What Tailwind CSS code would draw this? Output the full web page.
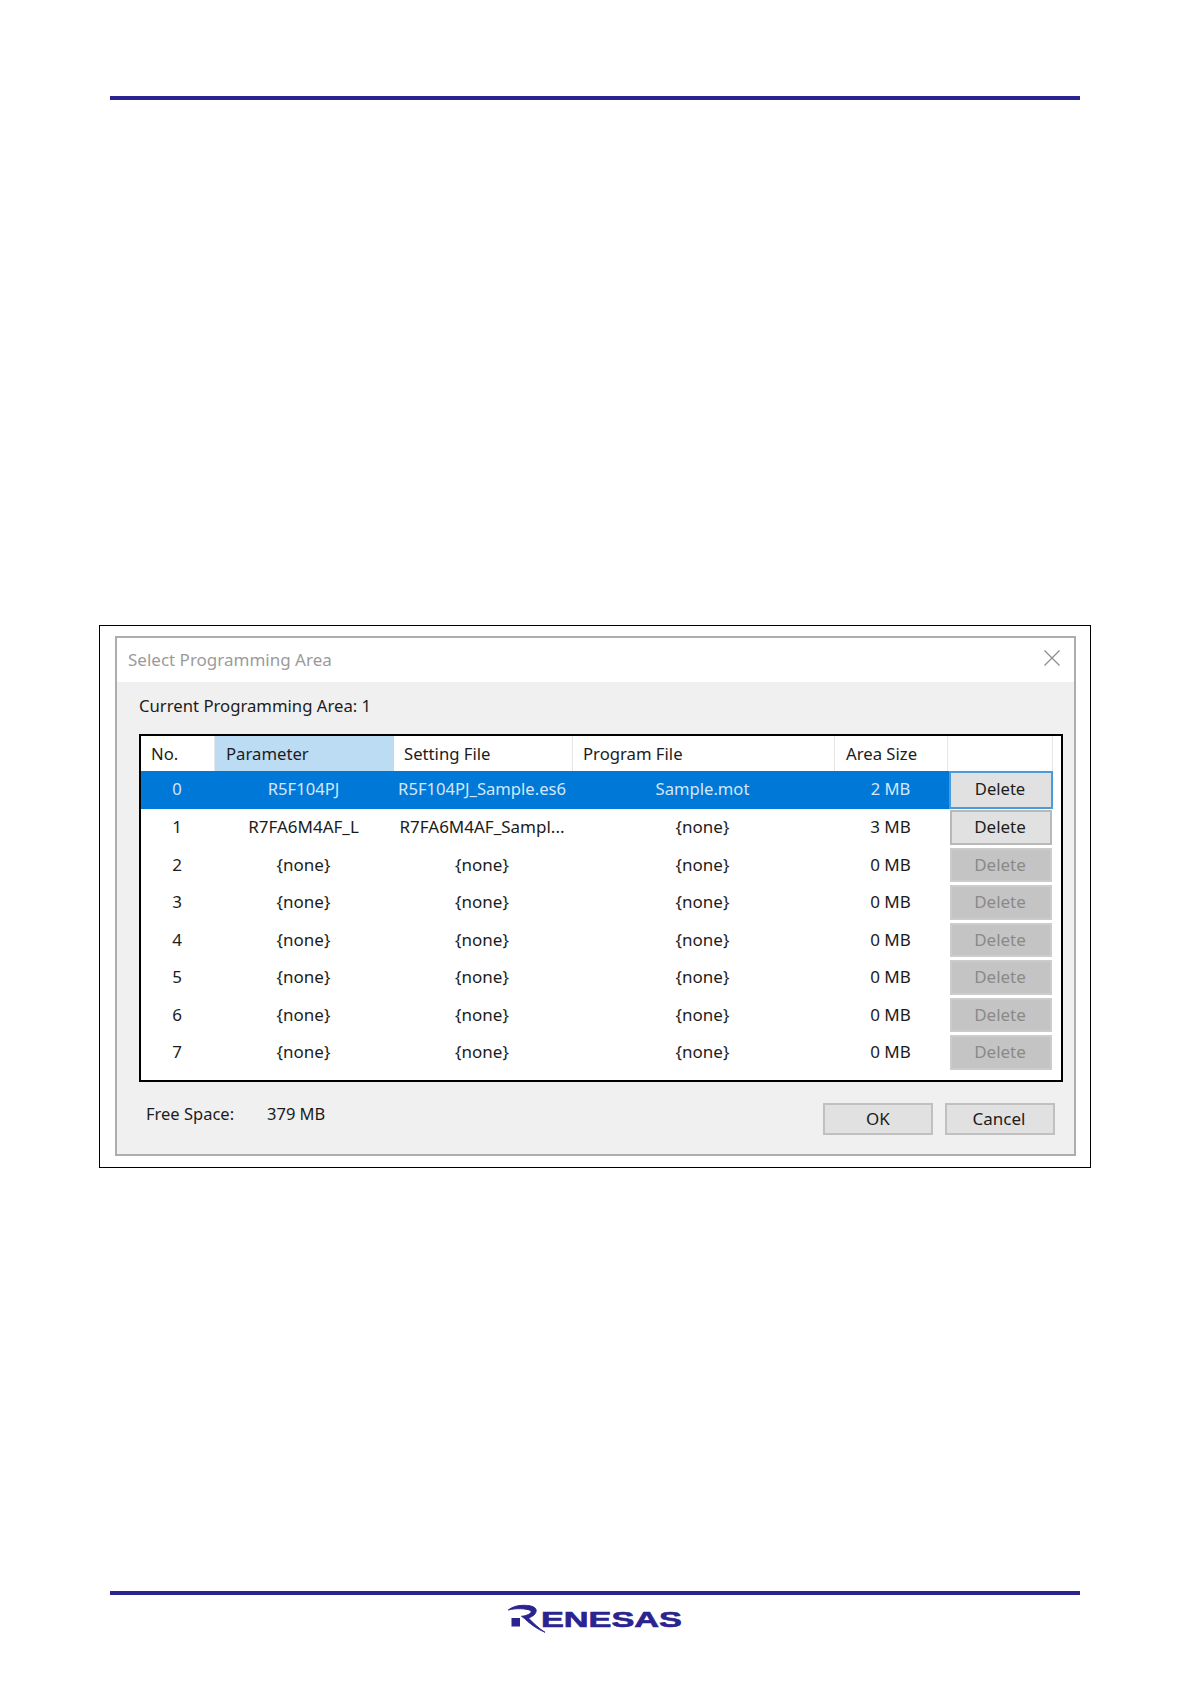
<!DOCTYPE html>
<html lang="en">
<head>
    <meta charset="UTF-8">
    <title>Select Programming Area</title>
    <script src="https://cdn.jsdelivr.net/npm/@tailwindcss/browser@4"></script>
</head>
<body class="bg-white font-['Noto_Sans',sans-serif] text-[17px] text-[#1c1c1c]">
<div class="w-[1191px] h-[1684px] flex flex-col overflow-hidden">
    <div class="mt-[96px] ml-[110px] w-[970px] h-[4px] bg-[#2a2390]"></div>

    <!-- screenshot frame -->
    <div class="mt-[525px] ml-[99px] w-[992px] h-[543px] border border-black pt-[10px] pl-[15px]">
        <div class="w-[961px] h-[520px] border-2 border-[#adadad] bg-[#f0f0f0] flex flex-col">
            <div class="h-[44px] bg-white flex items-center justify-between pl-[11px] pr-[13px] text-[#9b9b9b] text-[17px]">
                <span class="-mt-[1px]">Select Programming Area</span>
                <svg class="w-[18px] h-[18px] -mt-[4px]" viewBox="0 0 18 18" fill="none" stroke="#8c8c8c" stroke-width="1.2"><path d="M1.5 1.5l15 15M16.5 1.5l-15 15"/></svg>
            </div>
            <div class="pl-[22px] pr-[11px] pt-[11px]">
                <div class="h-[26px] leading-[26px] text-[16.7px]">Current Programming Area: 1</div>

                <!-- table -->
                <div class="mt-[15px] w-[924px] h-[348px] border-2 border-black bg-white">
                    <div class="grid grid-cols-[74px_179px_179px_262px_113px_105px] w-[912px] h-[35px] items-center text-[16.7px]">
                        <div class="h-full flex items-center pl-[10px] border-r border-[#e6e6e6]">No.</div>
                        <div class="h-full flex items-center pl-[11px] bg-[#bcdcf4]">Parameter</div>
                        <div class="h-full flex items-center pl-[10px] border-r border-[#e6e6e6]">Setting File</div>
                        <div class="h-full flex items-center pl-[10px] border-r border-[#e6e6e6]">Program File</div>
                        <div class="h-full flex items-center pl-[11px] border-r border-[#e6e6e6]">Area Size</div>
                        <div class="h-full border-r border-[#e6e6e6]"></div>
                    </div>

                    <div class="grid grid-cols-[72px_181px_176px_265px_111px_107px] w-[912px] h-[37.57px] items-center text-center bg-[#0078d7] text-[#d4e7f8] text-[16.6px] [&>div:not(:last-child)]:-mt-[1px]">
                        <div>0</div>
                        <div>R5F104PJ</div>
                        <div class="whitespace-nowrap">R5F104PJ_Sample.es6</div>
                        <div>Sample.mot</div>
                        <div>2 MB</div>
                        <div class="h-full"><div class="h-full ml-[3px] w-[104px] pb-[1px] pr-[2px] flex items-center justify-center bg-[#e1e1e1] border-2 border-[#4a9bdc] text-[#1c1c1c]">Delete</div></div>
                    </div>
                    <div class="grid grid-cols-[72px_181px_176px_265px_111px_107px] w-[912px] h-[37.57px] items-center text-center [&>div:not(:last-child)]:-mt-[1px]">
                        <div>1</div>
                        <div>R7FA6M4AF_L</div>
                        <div class="whitespace-nowrap">R7FA6M4AF_Sampl...</div>
                        <div>{none}</div>
                        <div>3 MB</div>
                        <div class="h-full py-[1.5px]"><div class="h-full ml-[4px] w-[102px] pb-[1px] pr-[2px] flex items-center justify-center bg-[#e1e1e1] border-2 border-[#b8b8b8] text-[#1c1c1c]">Delete</div></div>
                    </div>
                    <div class="grid grid-cols-[72px_181px_176px_265px_111px_107px] w-[912px] h-[37.57px] items-center text-center [&>div:not(:last-child)]:-mt-[1px]">
                        <div>2</div><div>{none}</div><div>{none}</div><div>{none}</div><div>0 MB</div>
                        <div class="h-full py-[1.5px]"><div class="h-full ml-[4px] w-[102px] pb-[1px] pr-[2px] flex items-center justify-center bg-[#c4c4c4] border-2 border-[#cccccc] text-[#8a8a8a]">Delete</div></div>
                    </div>
                    <div class="grid grid-cols-[72px_181px_176px_265px_111px_107px] w-[912px] h-[37.57px] items-center text-center [&>div:not(:last-child)]:-mt-[1px]">
                        <div>3</div><div>{none}</div><div>{none}</div><div>{none}</div><div>0 MB</div>
                        <div class="h-full py-[1.5px]"><div class="h-full ml-[4px] w-[102px] pb-[1px] pr-[2px] flex items-center justify-center bg-[#c4c4c4] border-2 border-[#cccccc] text-[#8a8a8a]">Delete</div></div>
                    </div>
                    <div class="grid grid-cols-[72px_181px_176px_265px_111px_107px] w-[912px] h-[37.57px] items-center text-center [&>div:not(:last-child)]:-mt-[1px]">
                        <div>4</div><div>{none}</div><div>{none}</div><div>{none}</div><div>0 MB</div>
                        <div class="h-full py-[1.5px]"><div class="h-full ml-[4px] w-[102px] pb-[1px] pr-[2px] flex items-center justify-center bg-[#c4c4c4] border-2 border-[#cccccc] text-[#8a8a8a]">Delete</div></div>
                    </div>
                    <div class="grid grid-cols-[72px_181px_176px_265px_111px_107px] w-[912px] h-[37.57px] items-center text-center [&>div:not(:last-child)]:-mt-[1px]">
                        <div>5</div><div>{none}</div><div>{none}</div><div>{none}</div><div>0 MB</div>
                        <div class="h-full py-[1.5px]"><div class="h-full ml-[4px] w-[102px] pb-[1px] pr-[2px] flex items-center justify-center bg-[#c4c4c4] border-2 border-[#cccccc] text-[#8a8a8a]">Delete</div></div>
                    </div>
                    <div class="grid grid-cols-[72px_181px_176px_265px_111px_107px] w-[912px] h-[37.57px] items-center text-center [&>div:not(:last-child)]:-mt-[1px]">
                        <div>6</div><div>{none}</div><div>{none}</div><div>{none}</div><div>0 MB</div>
                        <div class="h-full py-[1.5px]"><div class="h-full ml-[4px] w-[102px] pb-[1px] pr-[2px] flex items-center justify-center bg-[#c4c4c4] border-2 border-[#cccccc] text-[#8a8a8a]">Delete</div></div>
                    </div>
                    <div class="grid grid-cols-[72px_181px_176px_265px_111px_107px] w-[912px] h-[37.57px] items-center text-center [&>div:not(:last-child)]:-mt-[1px]">
                        <div>7</div><div>{none}</div><div>{none}</div><div>{none}</div><div>0 MB</div>
                        <div class="h-full py-[1.5px]"><div class="h-full ml-[4px] w-[102px] pb-[1px] pr-[2px] flex items-center justify-center bg-[#c4c4c4] border-2 border-[#cccccc] text-[#8a8a8a]">Delete</div></div>
                    </div>
                </div>

                <!-- footer of dialog -->
                <div class="mt-[21px] flex items-start">
                    <div class="w-[120px] pl-[7px] h-[22px] leading-[22px] shrink-0 text-[16.5px]">Free Space:</div>
                    <div class="ml-[8px] h-[22px] leading-[22px] text-[16.5px]">379 MB</div>
                    <div class="ml-auto flex gap-[12px] mr-[8px]">
                        <div class="w-[110px] h-[32px] flex items-center justify-center bg-[#e1e1e1] border-2 border-[#c0c0c0]">OK</div>
                        <div class="w-[110px] h-[32px] pr-[2px] flex items-center justify-center bg-[#e1e1e1] border-2 border-[#c0c0c0]">Cancel</div>
                    </div>
                </div>
            </div>
        </div>
    </div>

    <div class="mt-[423px] ml-[110px] w-[970px] h-[4px] bg-[#2a2390]"></div>
    <div class="mt-[9px] ml-[506px] w-[178px] h-[32px]">
        <svg class="w-[178px] h-[32px]" viewBox="0 0 178 32">
            <path d="M2.300 6C6 3 11 1.300 17.300 1.300C23 1.300 27.500 2 29.500 4.500C31 6.500 30 9 28 11C26.500 12.300 24.500 13.300 22.500 14C27 19 33 24.500 39 28.300C31 25 24 20 18.500 14.500L15.500 12.300C19 12 22 11 24 9.500C25.500 8.300 25.500 7 24 6.300C20 4.500 10 4 2.300 6Z" fill="#2a2390" stroke="#2a2390" stroke-width="0.9"/>
            <rect x="5.500" y="14" width="8.500" height="8.500" fill="#2a2390"/>
            <text x="35" y="22.500" textLength="141" lengthAdjust="spacingAndGlyphs" fill="#2a2390" stroke="#2a2390" stroke-width="0.6" font-family="Liberation Sans" font-weight="700" font-size="22">ENESAS</text>
        </svg>
    </div>
</div>
</body>
</html>
